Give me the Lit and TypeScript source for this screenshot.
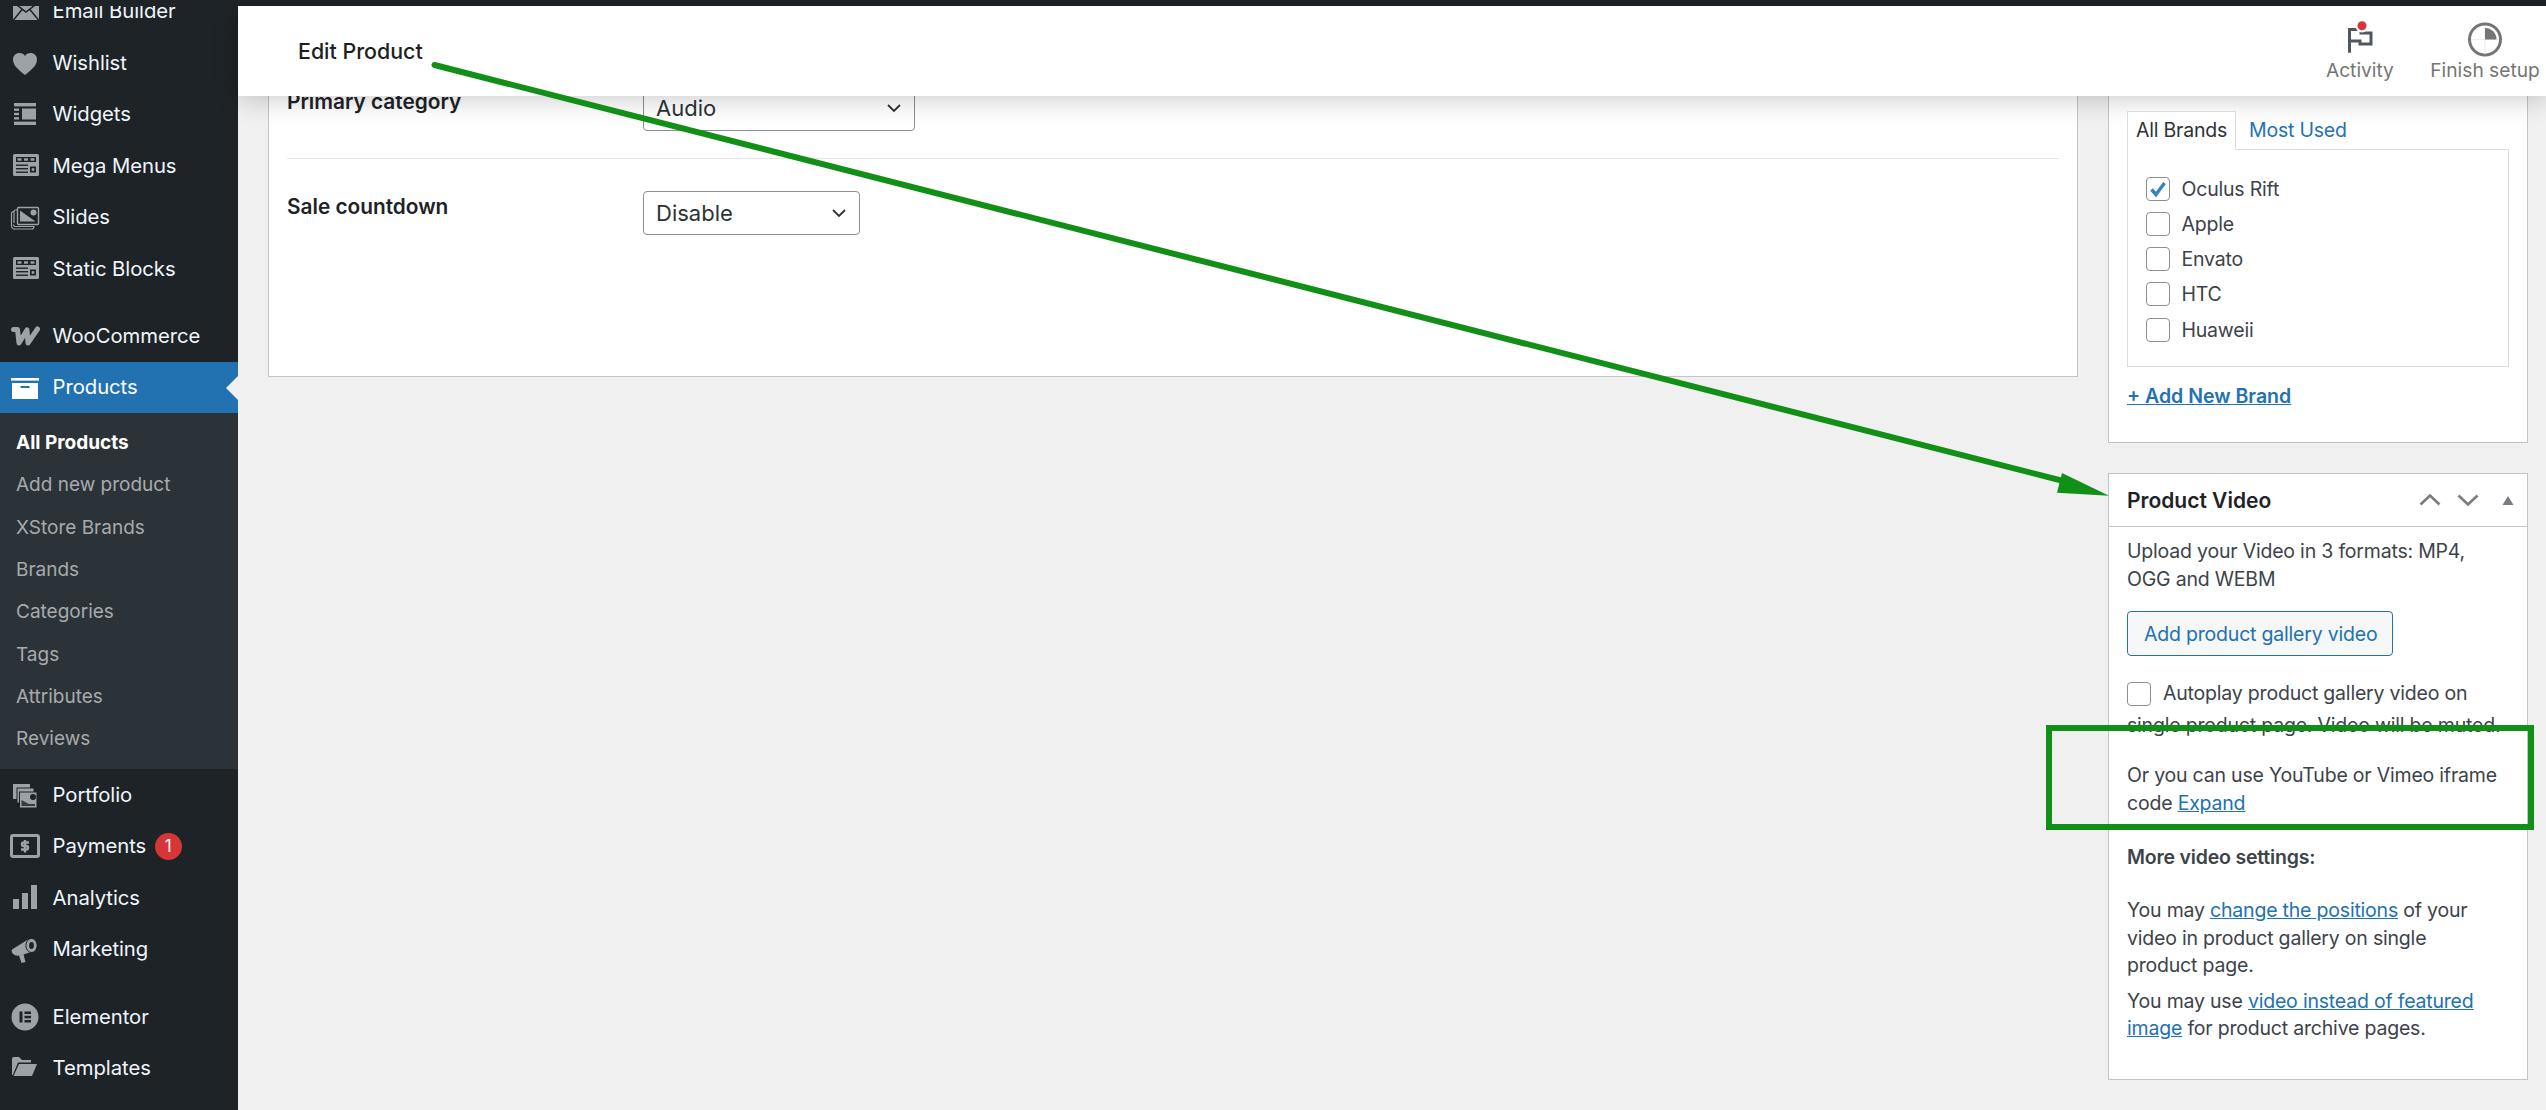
import { LitElement, html, css, svg } from "lit";
import { customElement } from "lit/decorators.js";

const D = "#1d2327";
const G = "#9ca2a7";

const megaIcon = svg`<rect x="3" y="3" width="26" height="22" rx="1.5" fill="${G}"/>
  <rect x="6" y="6" width="20" height="5" fill="${D}"/>
  <rect x="7.5" y="7.3" width="4" height="2.4" fill="${G}"/><rect x="14" y="7.3" width="4" height="2.4" fill="${G}"/><rect x="20.5" y="7.3" width="4" height="2.4" fill="${G}"/>
  <rect x="6" y="13.5" width="12" height="1.4" fill="${D}"/><rect x="6" y="17" width="12" height="1.4" fill="${D}"/><rect x="6" y="20.5" width="12" height="1.4" fill="${D}"/>
  <rect x="20" y="15.5" width="6" height="6" fill="${D}"/><rect x="21.7" y="17.2" width="2.6" height="2.6" fill="${G}"/>`;

const icons: Record<string, unknown> = {
  mail: svg`<rect x="3" y="6" width="26" height="18" rx="1" fill="${G}"/><path d="M3 6 16 16 29 6M3.5 24 12.5 13M28.5 24 19.5 13" fill="none" stroke="${D}" stroke-width="1.5"/>`,
  heart: svg`<path fill="${G}" d="M15 27C9 22 3 18 3 11.5 3 7.5 6 5 9.5 5 12 5 14 6 15 8 16 6 18 5 20.5 5 24 5 27 7.5 27 11.5 27 18 21 22 15 27Z"/>`,
  widgets: svg`<g fill="${G}"><rect x="4" y="4" width="22" height="3.4"/><rect x="4" y="22.6" width="22" height="3.4"/><rect x="12" y="9.5" width="14" height="11"/><rect x="4" y="9.5" width="5" height="2.4"/><rect x="4" y="13.8" width="5" height="2.4"/><rect x="4" y="18.1" width="5" height="2.4"/></g>`,
  mega: megaIcon,
  slides: svg`<path d="M7 8H5.5C4.5 8 4 8.5 4 9.5V21M4.5 9.5H3C2 10 1.5 10.5 1.5 11.5V24C1.5 25.5 2 26.5 3.5 27H21.5C23 27 24 26 24 24.5H5C4 24.5 3.5 23.5 3.5 22.5" fill="none" stroke="${G}" stroke-width="1.2"/>
    <rect x="7.5" y="5.5" width="21" height="17" rx="1" fill="none" stroke="${G}" stroke-width="1.4"/>
    <path d="M10 8.5 25.5 19.5H10Z" fill="${G}"/><circle cx="23.5" cy="10.5" r="3" fill="${G}"/>`,
  woo: svg`<path d="M3.5 8.5H7.5L9 22 17 9 18 22 27.5 8" fill="none" stroke="${G}" stroke-width="5" stroke-linejoin="round" stroke-linecap="round"/>`,
  box: svg`<g fill="#fff"><rect x="1" y="6" width="28" height="2.6"/><rect x="2" y="11" width="26" height="16"/></g><rect x="10.5" y="14" width="9" height="2" fill="#2271b1"/>`,
  portfolio: svg`<g fill="${G}"><rect x="3" y="4" width="17" height="15" /><rect x="7" y="8" width="17" height="15" stroke="${D}"/></g>
    <rect x="9.5" y="12" width="17.5" height="16" fill="${G}" stroke="${D}" stroke-width="1"/><path d="M11.5 20 19 24 25 24V26H11.5Z" fill="${D}" opacity=".8"/><circle cx="23" cy="17" r="3" fill="${D}"/>`,
  pay: svg`<rect x="1.5" y="4.5" width="27" height="21" rx="1.5" fill="none" stroke="${G}" stroke-width="3"/><path d="M19 11.5H13.5C11.5 11.5 11.5 15 13.5 15H16.5C18.5 15 18.5 18.5 16.5 18.5H11M15 9V21.5" fill="none" stroke="${G}" stroke-width="2.4"/>`,
  bars: svg`<g fill="${G}"><rect x="3" y="16" width="6" height="10"/><rect x="12" y="10" width="6" height="16"/><rect x="21" y="2" width="6" height="24"/></g>`,
  mega2: svg`<path d="M2 15.5 18 5.5 24 17 13.5 20.5 15.5 28 11.5 29 9 21.5C5 22.5 0.5 19 2 15.5Z" fill="${G}"/><ellipse cx="21.5" cy="11.5" rx="5.6" ry="7" fill="${G}" stroke="${D}" stroke-width="1"/><ellipse cx="21.5" cy="11.5" rx="2.4" ry="3.4" fill="${D}"/>`,
  el: svg`<circle cx="15" cy="15" r="13.5" fill="${G}"/><g fill="${D}"><rect x="9.5" y="9.5" width="3" height="11"/><rect x="14.5" y="9.5" width="6.5" height="2.5"/><rect x="14.5" y="13.8" width="6.5" height="2.5"/><rect x="14.5" y="18" width="6.5" height="2.5"/></g>`,
  folder: svg`<path d="M2 6C2 5 2.5 4 3.5 4H9L12 7H21V9.5H8L2.8 22H2Z" fill="${G}"/><path d="M9 11H27L22 23H3.5Z" fill="${G}"/>`,
};

type Item = { label: string; icon: string; gap?: boolean; badge?: string };
const topItems: Item[] = [
  { label: "Email Builder", icon: "mail" },
  { label: "Wishlist", icon: "heart" },
  { label: "Widgets", icon: "widgets" },
  { label: "Mega Menus", icon: "mega" },
  { label: "Slides", icon: "slides" },
  { label: "Static Blocks", icon: "mega" },
  { label: "WooCommerce", icon: "woo", gap: true },
];
const subItems = ["Add new product", "XStore Brands", "Brands", "Categories", "Tags", "Attributes", "Reviews"];
const lowerItems: Item[] = [
  { label: "Portfolio", icon: "portfolio" },
  { label: "Payments", icon: "pay", badge: "1" },
  { label: "Analytics", icon: "bars" },
  { label: "Marketing", icon: "mega2" },
  { label: "Elementor", icon: "el", gap: true },
  { label: "Templates", icon: "folder" },
];
const brands = [
  { name: "Oculus Rift", on: true },
  { name: "Apple" },
  { name: "Envato" },
  { name: "HTC" },
  { name: "Huaweii" },
];

@customElement("app-root")
export class AppRoot extends LitElement {
  static styles = css`
    :host { display: block; position: relative; width: 2546px; height: 1110px; overflow: hidden; background: #f0f0f1; font-family: Inter, "Liberation Sans", sans-serif; font-size: 19.5px; line-height: 28px; color: #3c434a; letter-spacing: -0.2px; }
    * { box-sizing: border-box; }
    a { color: #2271b1; }
    .topbar { height: 6px; background: #1d2327; }
    .row { display: flex; height: 1104px; }
    .side { width: 238px; flex: none; background: #1d2327; overflow: hidden; }
    .menu { margin-top: -20.8px; }
    .item { height: 51.6px; display: flex; align-items: center; gap: 12.5px; padding-left: 10px; color: #f0f6fc; font-size: 20.3px; letter-spacing: -0.05px; position: relative; }
    .item svg { width: 30px; height: 30px; flex: none; }
    .gap { margin-top: 15.6px; }
    .active { background: #2271b1; color: #fff; height: 51px; }
    .active::after { content: ""; position: absolute; right: 0; top: 14px; border: 12px solid transparent; border-right-color: #f0f0f1; border-left-width: 0; }
    .sub { background: #2c3338; padding: 9px 0 8.5px 16px; }
    .sub div { height: 42.3px; display: flex; align-items: center; font-size: 19px; color: #a7aaad; letter-spacing: 0; }
    .sub .cur { color: #fff; font-weight: 700; }
    .badge { width: 27px; height: 27px; border-radius: 50%; background: #d63638; color: #fff; font-size: 17px; display: flex; align-items: center; justify-content: center; margin-left: -4px; }
    .main { flex: 1; display: flex; gap: 30px; align-items: flex-start; padding: 34px 18px 0 30px; position: relative; }
    .header { position: absolute; left: 0; right: 0; top: 0; height: 90px; background: #fff; box-shadow: 0 4px 24px rgba(0, 0, 0, 0.2); display: flex; justify-content: space-between; align-items: flex-start; padding: 0 6.2px 0 60px; color: #1e1e1e; }
    .title { font-size: 21.4px; font-weight: 500; margin-top: 31px; letter-spacing: 0; }
    .tools { display: flex; gap: 36.4px; align-items: flex-start; padding-top: 8px; color: #757575; font-size: 19.2px; letter-spacing: 0; }
    .tool { display: flex; flex-direction: column; align-items: center; }
    .tool svg { width: 44px; height: 44px; margin-bottom: -2px; }
    .card { background: #fff; border: 1px solid #c3c4c7; }
    .wide { width: 1810px; flex: none; height: 337px; padding: 0 18px; }
    .frow { display: flex; }
    .frow.first { padding: 45px 0 27px; border-bottom: 1px solid #e5e5e5; }
    .frow.second { padding-top: 32px; }
    .frow label { width: 356px; font-weight: 600; font-size: 20.8px; color: #1d2327; margin-top: 2px; letter-spacing: 0; }
    .select { height: 44.5px; border: 1px solid #8c8f94; border-radius: 4px; padding: 0 12px 0 12px; display: flex; align-items: center; justify-content: space-between; font-size: 22px; color: #2c3338; background: #fff; letter-spacing: 0; }
    .select svg { width: 16px; height: 16px; }
    .s1 { width: 272px; }
    .s2 { width: 217px; }
    .col { width: 420px; flex: none; display: flex; flex-direction: column; gap: 30px; }
    .brands { padding: 70px 18px 32px; }
    .tabs { display: flex; align-items: center; height: 38px; }
    .tab { height: 39px; width: 109px; border: 1px solid #dcdcde; border-bottom: 1px solid #fff; text-align: center; line-height: 36px; color: #2c3338; position: relative; z-index: 1; background: #fff; margin-bottom: -1px; }
    .tabs a { margin-left: 13px; text-decoration: none; }
    .panel { border: 1px solid #dcdcde; height: 218px; padding: 26.5px 18px; display: flex; flex-direction: column; gap: 11.3px; }
    .check { display: flex; gap: 11.5px; align-items: center; height: 24px; }
    .box { display: inline-flex; width: 24px; height: 24px; border: 1px solid #8c8f94; border-radius: 4px; background: #fff; flex: none; vertical-align: middle; align-items: center; justify-content: center; }
    .box svg { width: 20px; height: 20px; }
    .add { display: block; margin-top: 15px; font-weight: 600; letter-spacing: 0; }
    .head { height: 53px; border-bottom: 1px solid #c3c4c7; display: flex; align-items: center; justify-content: space-between; padding: 0 7.5px 0 18px; }
    .head h2 { margin: 0; font-size: 21px; font-weight: 600; color: #1d2327; letter-spacing: 0; padding-top: 1px; }
    .ctrls { display: flex; align-items: center; gap: 10px; }
    .ctrls svg { width: 28px; height: 28px; }
    .ctrls svg.t { width: 24px; margin-left: 4px; }
    .body { padding: 10px 18px 37px; height: 552px; }
    .body p { margin: 0; }
    .btn { display: inline-flex; align-items: center; height: 45px; width: 266px; margin-top: 18px; padding-left: 16px; border: 1px solid #2271b1; border-radius: 4px; background: #f6f7f7; color: #2271b1; font-size: 19.5px; white-space: nowrap; }
    .body .auto { margin-top: 21px; line-height: 32px; }
    .auto .box { margin: -2px 12px 0 0; }
    .body .or { margin-top: 19.5px; line-height: 28.6px; }
    .body .more { margin-top: 25px; font-weight: 600; }
    .body .may { margin-top: 26.5px; line-height: 27.5px; }
    .body .may2 { margin-top: 8px; line-height: 27.5px; }
    .overlay { position: absolute; left: 0; top: 0; width: 2546px; height: 1110px; pointer-events: none; }
  `;

  private item(i: Item) {
    return html`<div class="item ${i.gap ? "gap" : ""}">
      <svg viewBox="0 0 30 30">${icons[i.icon]}</svg>
      <span>${i.label}</span>
      ${i.badge ? html`<span class="badge">${i.badge}</span>` : ""}
    </div>`;
  }

  private chevron() {
    return html`<svg viewBox="0 0 16 16"><path d="M2 5 8 11 14 5" fill="none" stroke="#2c3338" stroke-width="1.8"/></svg>`;
  }

  render() {
    return html`
      <div class="topbar"></div>
      <div class="row">
        <nav class="side">
          <div class="menu">
            ${topItems.map((i) => this.item(i))}
            <div class="item active"><svg viewBox="0 0 30 30">${icons.box}</svg><span>Products</span></div>
            <div class="sub">
              <div class="cur">All Products</div>
              ${subItems.map((s) => html`<div>${s}</div>`)}
            </div>
            ${lowerItems.map((i) => this.item(i))}
          </div>
        </nav>
        <main class="main">
          <section class="card wide">
            <div class="frow first"><label>Primary category</label><div class="select s1"><span>Audio</span>${this.chevron()}</div></div>
            <div class="frow second"><label>Sale countdown</label><div class="select s2"><span>Disable</span>${this.chevron()}</div></div>
          </section>
          <div class="col">
            <section class="card brands">
              <div class="tabs"><div class="tab">All Brands</div><a href="#">Most Used</a></div>
              <div class="panel">
                ${brands.map((b) => html`<div class="check"><span class="box">${b.on ? html`<svg viewBox="0 0 20 20"><path d="M3.5 10.5 8 15.5 16.5 4" fill="none" stroke="#3582c4" stroke-width="3.4"/></svg>` : ""}</span><span>${b.name}</span></div>`)}
              </div>
              <a class="add" href="#">+ Add New Brand</a>
            </section>
            <section class="card">
              <div class="head">
                <h2>Product Video</h2>
                <div class="ctrls">
                  <svg viewBox="0 0 28 28"><path d="M4.5 18.5 14 9.5 23.5 18.5" fill="none" stroke="#787c82" stroke-width="2.6"/></svg>
                  <svg viewBox="0 0 28 28"><path d="M4.5 9.5 14 18.5 23.5 9.5" fill="none" stroke="#787c82" stroke-width="2.6"/></svg>
                  <svg class="t" viewBox="0 0 24 28"><path d="M6.5 19 12 10 17.5 19Z" fill="#787c82"/></svg>
                </div>
              </div>
              <div class="body">
                <p>Upload your Video in 3 formats: MP4,<br />OGG and WEBM</p>
                <div class="btn">Add product gallery video</div>
                <p class="auto"><span class="box"></span>Autoplay product gallery video on<br />single product page. Video will be muted.</p>
                <p class="or">Or you can use YouTube or Vimeo iframe<br />code <a href="#">Expand</a></p>
                <p class="more">More video settings:</p>
                <p class="may">You may <a href="#">change the positions</a> of your<br />video in product gallery on single<br />product page.</p>
                <p class="may2">You may use <a href="#">video instead of featured<br />image</a> for product archive pages.</p>
              </div>
            </section>
          </div>
          <header class="header">
            <div class="title">Edit Product</div>
            <div class="tools">
              <div class="tool">
                <svg viewBox="0 0 44 44"><path d="M11.5 38.7V15.5H23V19H33V30H22V27H11.5" fill="none" stroke="#50575e" stroke-width="3"/><circle cx="24" cy="12" r="6.5" fill="#fff"/><circle cx="24" cy="11.7" r="4.5" fill="#d63638"/></svg>
                <span>Activity</span>
              </div>
              <div class="tool">
                <svg viewBox="0 0 44 44"><circle cx="22" cy="25.5" r="15.5" fill="#fff" stroke="#757575" stroke-width="3"/><path d="M22 12V40M8 25.5H36" stroke="#eee" stroke-width="1.2"/><path d="M22 14A11.5 11.5 0 0 1 33.5 25.5H22Z" fill="#757575"/></svg>
                <span>Finish setup</span>
              </div>
            </div>
          </header>
        </main>
      </div>
      <svg class="overlay" viewBox="0 0 2546 1110">
        <path d="M434.5 65 2075 484" fill="none" stroke="#118f17" stroke-width="6" stroke-linecap="round"/>
        <path d="M2062 473 2109 495.7 2057 492.7Z" fill="#118f17"/>
        <rect x="2049" y="728" width="482" height="99" fill="none" stroke="#118f17" stroke-width="6"/>
      </svg>
    `;
  }
}
